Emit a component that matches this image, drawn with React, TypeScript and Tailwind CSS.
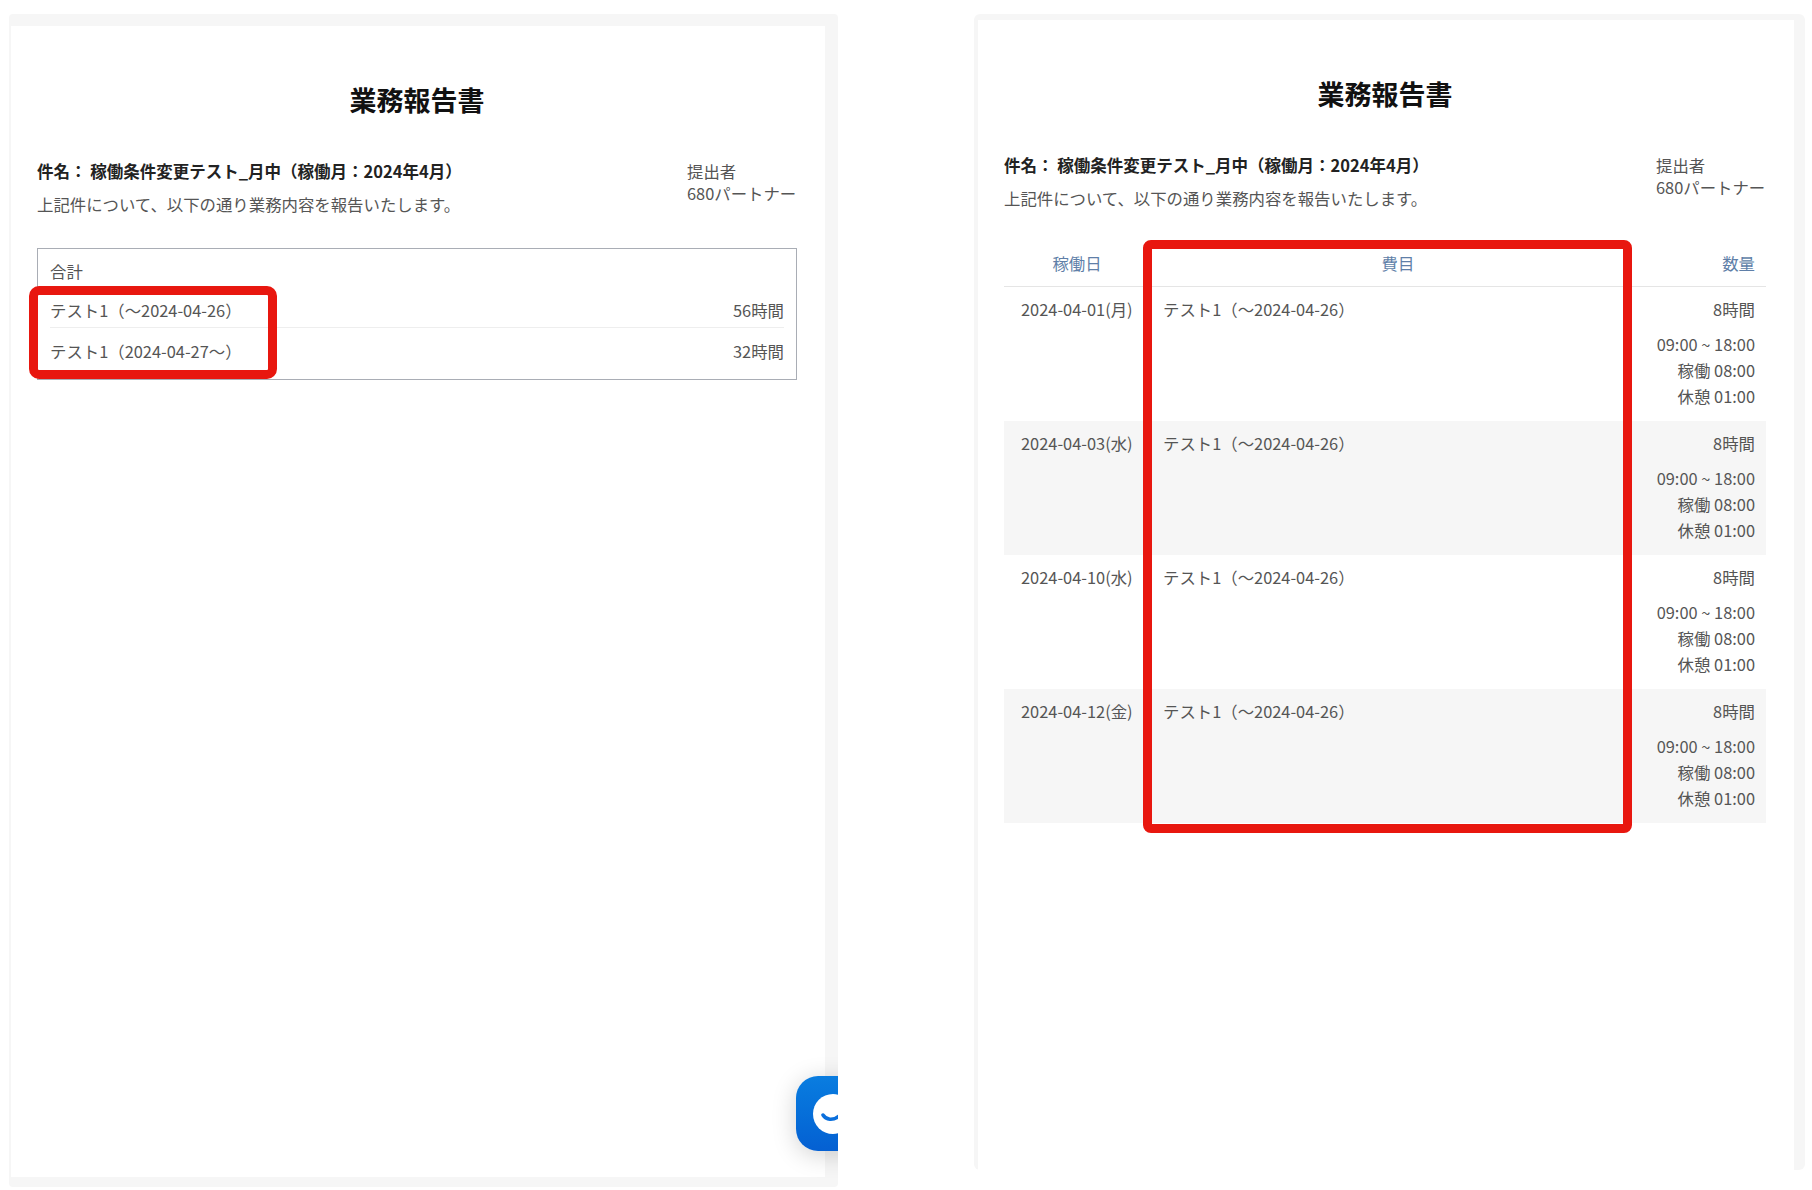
const FONT = "font-['Noto_Sans_CJK_JP','Noto_Sans',sans-serif]";

const TOTALS = [
  { label: "テスト1（～2024-04-26）", hours: "56時間" },
  { label: "テスト1（2024-04-27～）", hours: "32時間" },
];

const ROWS = [
  { date: "2024-04-01(月)", shaded: false },
  { date: "2024-04-03(水)", shaded: true },
  { date: "2024-04-10(水)", shaded: false },
  { date: "2024-04-12(金)", shaded: true },
];

function ReportHead({ subjectClass }: { subjectClass: string }) {
  return (
    <>
      <h1 className="text-center text-[27px] leading-[36px] font-bold text-[#111]">業務報告書</h1>
      <div className="mt-[42px] flex justify-between">
        <div>
          <p className={`text-[16.5px] leading-[24px] font-bold text-[#222] ${subjectClass}`}>件名： 稼働条件変更テスト_月中（稼働月：2024年4月）</p>
          <p className="mt-[9px] text-[16.4px] leading-[24px] text-[#555]">上記件について、以下の通り業務内容を報告いたします。</p>
        </div>
        <div className="w-[110px] text-[16.4px] leading-[22px] text-[#555]">
          <p>提出者</p>
          <p className="whitespace-nowrap">680パートナー</p>
        </div>
      </div>
    </>
  );
}

function SummaryPage() {
  return (
    <div className="relative ml-[9px] mt-[14px] h-[1173px] w-[829px] shrink-0 overflow-hidden rounded-[4px] bg-[#f6f6f6] pb-[10px] pl-[2px] pr-[13px] pt-[12px]">
      <div className="h-full bg-white pl-[26px] pr-[28px] pt-[56px]">
        <ReportHead subjectClass="-mt-[1px]" />
        <div className="relative mt-[32px] h-[132px] border border-[#a9adb5] px-[12px] text-[16.4px] text-[#555]">
          <p className="pt-[10px] leading-[24px]">合計</p>
          <div className="mt-[5px]">
            {TOTALS.map((row, i) => (
              <div key={row.label} className={`flex h-[40px] items-center justify-between pt-[6px] ${i === 0 ? "border-b border-[#eeeeee]" : ""}`}>
                <span>{row.label}</span>
                <span>{row.hours}</span>
              </div>
            ))}
          </div>
          {/* 赤枠の注釈 */}
          <div className="absolute left-[-9px] top-[37px] h-[93px] w-[248px] rounded-[10px] border-[9px] border-[#e8170f]" />
        </div>
      </div>
      {/* チャットボタン */}
      <div className="absolute left-[787px] top-[1062px] flex h-[75px] w-[75px] items-center rounded-[22px] bg-gradient-to-b from-[#0a7de0] to-[#0560d2] pl-[17px] shadow-[0_4px_24px_rgba(0,0,0,0.18)]">
        <svg width="40" height="40" viewBox="0 0 40 40">
          <circle cx="20" cy="20" r="20" fill="#fff" />
          <path d="M10 21c3 5 10 6 16 1" fill="none" stroke="#0a6fdc" strokeWidth="3.5" strokeLinecap="round" />
        </svg>
      </div>
    </div>
  );
}

function DetailPage() {
  return (
    <div className="ml-[136px] mt-[14px] h-[1156px] w-[831px] shrink-0 rounded-[6px] bg-[#f6f6f6] pl-[4px] pr-[11px] pt-[6px]">
      <div className="h-full bg-white pl-[26px] pr-[28px] pt-[56px]">
        <ReportHead subjectClass="-mt-[1px]" />
        <div className="relative mt-[31px] text-[16.4px] text-[#555]">
          <div className="flex h-[46px] items-center border-b border-[#e5e5e5] text-[#5f7fa8]">
            <div className="w-[146px] text-center">稼働日</div>
            <div className="flex-1 text-center">費目</div>
            <div className="w-[120px] pr-[11px] text-right">数量</div>
          </div>
          {ROWS.map((row) => (
            <div key={row.date} className={`flex h-[134px] pt-[10px] ${row.shaded ? "bg-[#f6f6f6]" : ""}`}>
              <div className="w-[146px] pl-[17px] leading-[24px] whitespace-nowrap">{row.date}</div>
              <div className="flex-1 pl-[13px] leading-[24px]">テスト1（～2024-04-26）</div>
              <div className="w-[120px] pr-[11px] text-right leading-[26px]">
                <p className="mb-[10px] leading-[24px]">8時間</p>
                <p>09:00 ~ 18:00</p>
                <p>稼働 08:00</p>
                <p>休憩 01:00</p>
              </div>
            </div>
          ))}
          {/* 赤枠の注釈 */}
          <div className="absolute left-[139px] top-[-1px] h-[593px] w-[489px] rounded-[8px] border-[9px] border-[#e8170f]" />
        </div>
      </div>
    </div>
  );
}

export default function App() {
  return (
    <div className={`flex h-[1190px] w-[1812px] items-start overflow-hidden bg-white ${FONT}`}>
      <SummaryPage />
      <DetailPage />
    </div>
  );
}
